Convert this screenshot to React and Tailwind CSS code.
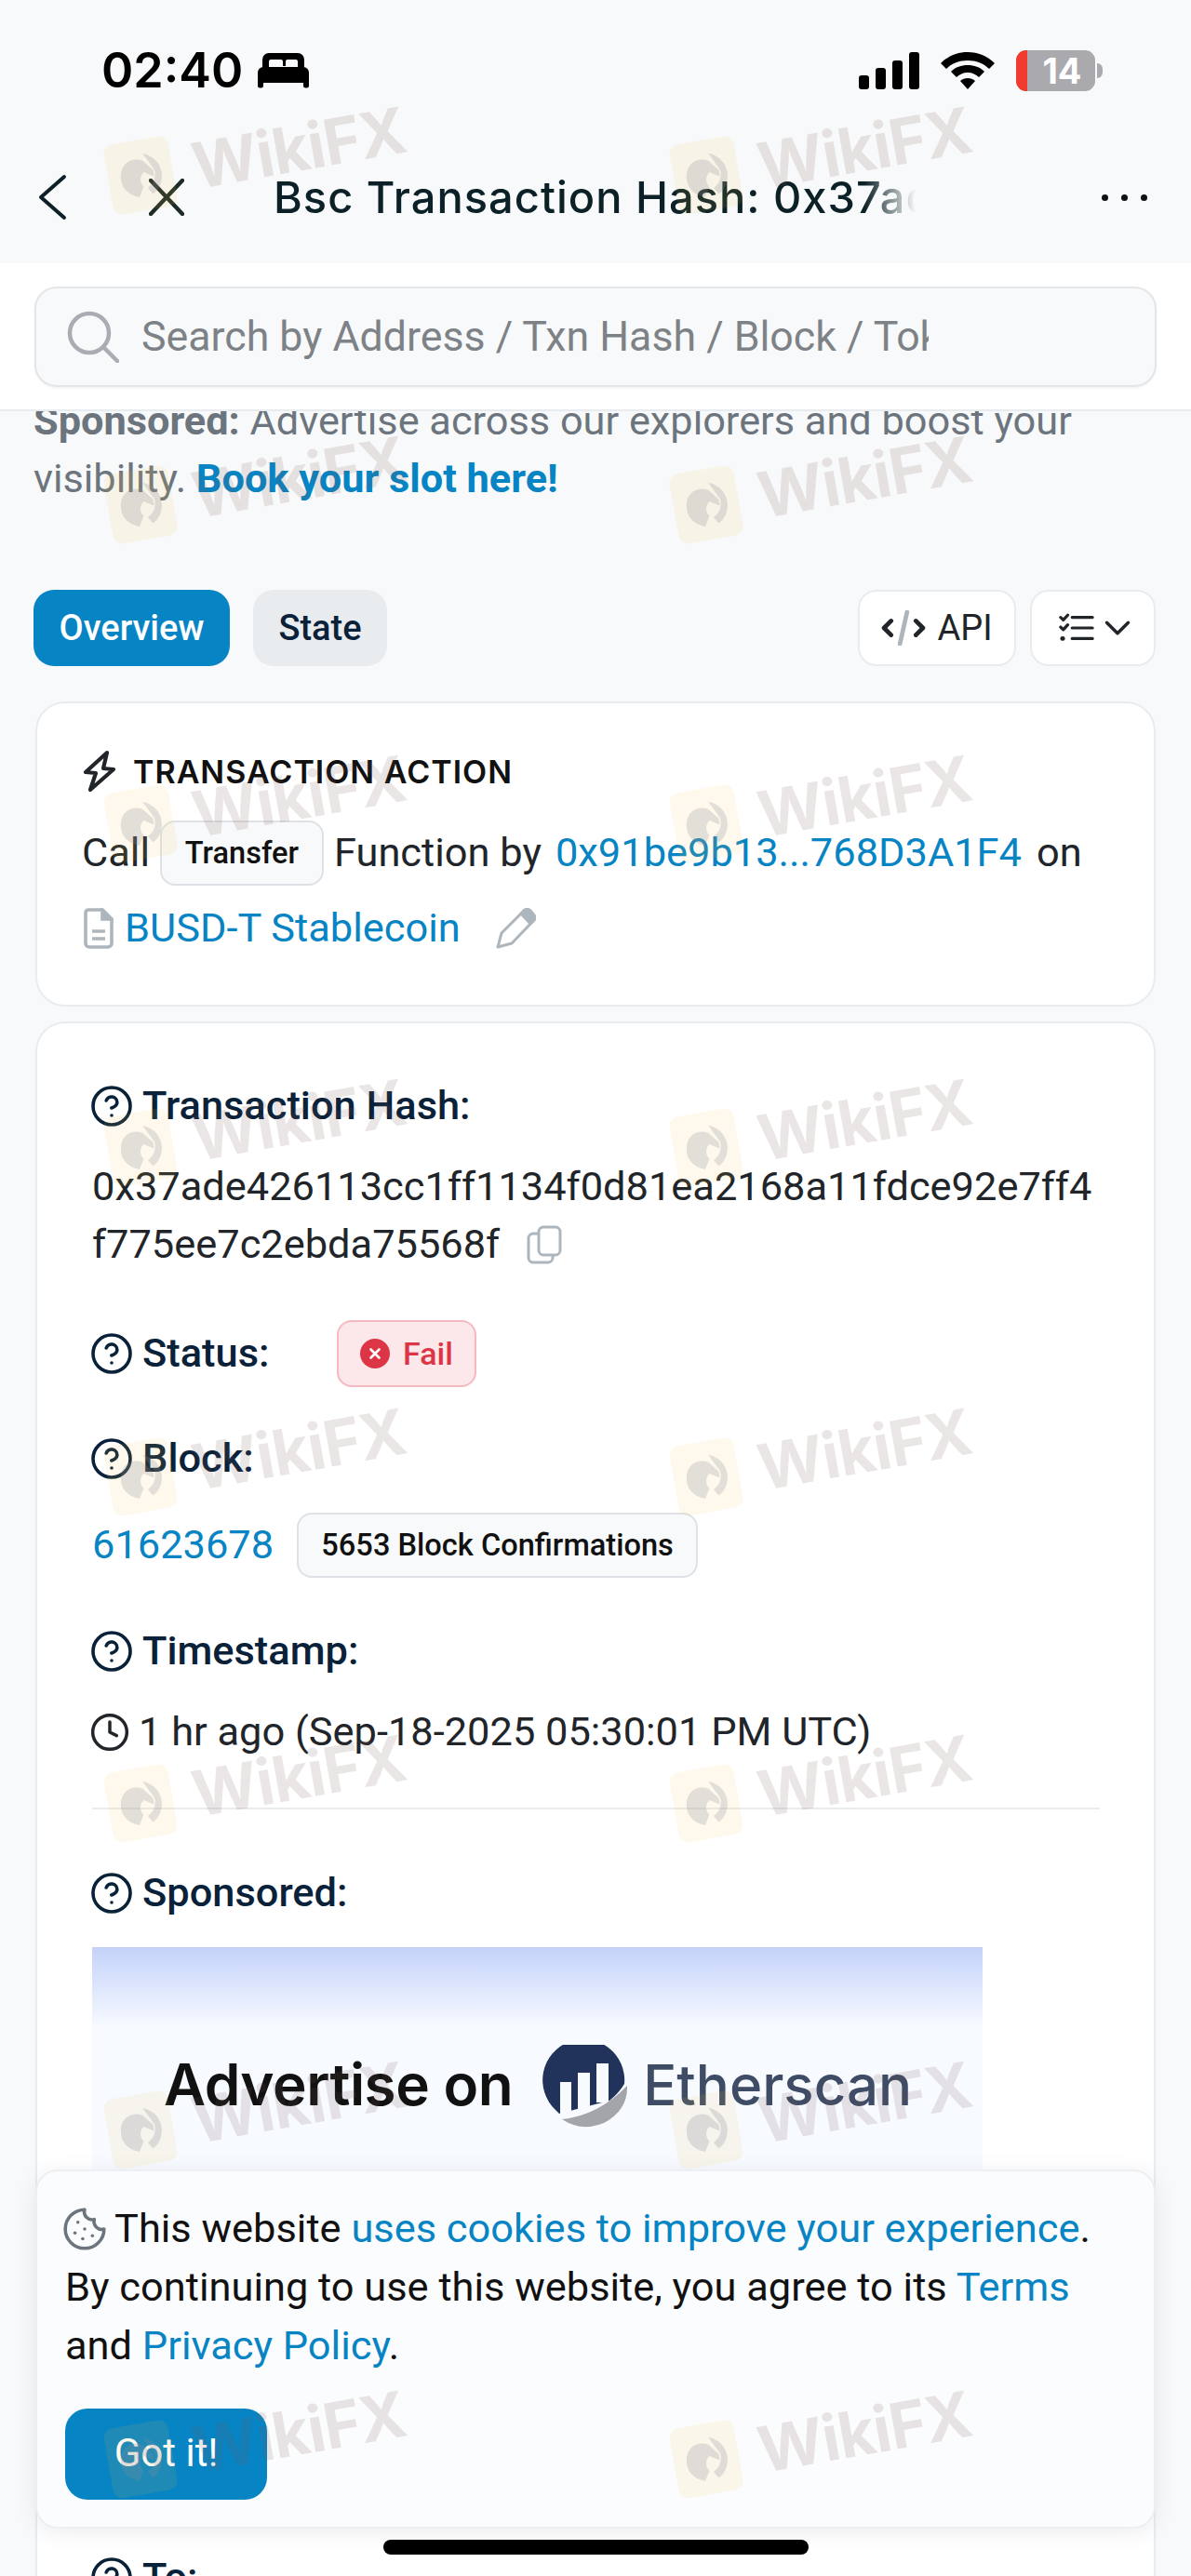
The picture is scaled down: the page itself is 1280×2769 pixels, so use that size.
import React from "react";
import { CircleHelp, Clock, ChevronDown, Cookie } from "lucide-react";

const WM_TOPS = [
  "top-[125px]", "top-[479px]", "top-[822px]", "top-[1170px]",
  "top-[1524px]", "top-[1875px]", "top-[2226px]", "top-[2580px]",
];

function Watermark({ cls }) {
  return (
    <div className={"absolute flex w-[340px] items-center gap-[22px] -rotate-[10deg] " + cls}>
      <div className="flex h-[76px] w-[70px] shrink-0 items-center justify-center rounded-[10px] bg-[#f5c343]/10">
        <svg viewBox="0 0 50 50" className="h-[56px] w-[56px] rotate-[10deg]" fill="#8c8c9a" fillOpacity="0.24">
          <path d="M6 26C6 14 16 7 27 11L37 20L38 26L28 22C24 26 24 32 28 36L24 46C12 44 6 36 6 26Z" />
          <path d="M27 4A22 22 0 0 1 37 43L32 37A15 15 0 0 0 38 19Z" />
        </svg>
      </div>
      <span className="font-['Inter',sans-serif] text-[68px] font-bold leading-[80px] tracking-[-1px] text-[#785a5a]/15">WikiFX</span>
    </div>
  );
}

function Label({ children, cls = "" }) {
  return (
    <div className={"flex h-[50px] items-center text-[43.4px] font-medium text-[#0a2239] " + cls}>
      <CircleHelp className="-ml-[3px] h-[48px] w-[48px] shrink-0 text-[#0a2239]" strokeWidth={1.8} />
      <span className="ml-[9px]">{children}</span>
    </div>
  );
}

export default function App() {
  return (
    <div className="relative h-[2769px] w-[1280px] overflow-hidden bg-[#f8f9fa] font-['Roboto',sans-serif] text-[43.4px] text-[#111827]">
      {/* status bar */}
      <div className="flex h-[152px] items-center justify-between pl-[109px] pr-[95px]">
        <div className="flex items-center gap-[16px]">
          <span className="font-['Inter',sans-serif] text-[52px] font-semibold leading-none text-black">02:40</span>
          <svg viewBox="0 0 55 38" className="h-[38px] w-[55px]">
            <path d="M5 16V7a7 7 0 0 1 7-7h31a7 7 0 0 1 7 7v9H43V9a2 2 0 0 0-2-2H32a2 2 0 0 0-2 2v5h-3V9a2 2 0 0 0-2-2H14a2 2 0 0 0-2 2v7Z" fill="#000" />
            <path d="M6 15h43a6 6 0 0 1 6 6v14a2.5 2.5 0 0 1-2.5 2.5h-1A2.5 2.5 0 0 1 49 35v-3H6v3a2.5 2.5 0 0 1-2.5 2.5h-1A2.5 2.5 0 0 1 0 35V21a6 6 0 0 1 6-6Z" fill="#000" />
          </svg>
        </div>
        <div className="flex items-center gap-[23px]">
          <svg viewBox="0 0 65 40" className="h-[40px] w-[65px]">
            <rect x="0" y="25" width="11" height="15" rx="3" fill="#000" />
            <rect x="18" y="17" width="11" height="23" rx="3" fill="#000" />
            <rect x="36" y="9" width="11" height="31" rx="3" fill="#000" />
            <rect x="54" y="0" width="11" height="40" rx="3" fill="#000" />
          </svg>
          <svg viewBox="0 0 58 40" className="h-[40px] w-[58px]">
            <path d="M29 0C18 0 8 4 0 12l6 6c6-6 14-9 23-9s17 3 23 9l6-6C50 4 40 0 29 0z" fill="#000" />
            <path d="M29 14c-7 0-13 2-18 7l6 6c3-3 7-5 12-5s9 2 12 5l6-6c-5-5-11-7-18-7z" fill="#000" />
            <path d="M29 28c-3 0-6 1-8 3l8 9 8-9c-2-2-5-3-8-3z" fill="#000" />
          </svg>
          <div className="flex items-center gap-[2px]">
            <div className="relative flex h-[44px] w-[85px] items-center justify-center overflow-hidden rounded-[11px] bg-[#a9a9ae] pl-[14px]">
              <div className="absolute inset-y-0 left-0 w-[12px] bg-[#f23b2f]" />
              <span className="font-['Inter',sans-serif] text-[38px] font-bold leading-none text-white">14</span>
            </div>
            <div className="h-[16px] w-[6px] rounded-r-full bg-[#a9a9ae]" />
          </div>
        </div>
      </div>

      {/* nav bar */}
      <div className="flex h-[131px] items-start pb-[11px]">
        <div className="flex h-[120px] w-full items-center">
          <svg viewBox="0 0 31 50" className="ml-[41px] h-[50px] w-[31px] shrink-0" fill="none" stroke="#0d2027" strokeWidth="4" strokeLinecap="round" strokeLinejoin="round">
            <path d="M28 3 L3 25 L28 47" />
          </svg>
          <svg viewBox="0 0 38 40" className="ml-[88px] h-[40px] w-[38px] shrink-0" fill="none" stroke="#1c2b26" strokeWidth="4.4" strokeLinecap="round">
            <path d="M2 2 L36 38 M36 2 L2 38" />
          </svg>
          <div className="ml-[96px] w-[690px] overflow-hidden whitespace-nowrap font-['Inter',sans-serif] text-[47px] font-medium tracking-[1px] text-[#0b2027] [mask-image:linear-gradient(to_right,black_92%,transparent)]">
            Bsc Transaction Hash: 0x37ade426113cc1
          </div>
          <div className="ml-auto mr-[47px] flex gap-[14px]">
            <div className="h-[7px] w-[7px] rounded-full bg-[#111]" />
            <div className="h-[7px] w-[7px] rounded-full bg-[#111]" />
            <div className="h-[7px] w-[7px] rounded-full bg-[#111]" />
          </div>
        </div>
      </div>

      {/* search */}
      <div className="h-[159px] border-b-2 border-[#e9ecef] bg-white px-[37px] pt-[25px]">
        <div className="flex h-[108px] items-center rounded-[24px] border-2 border-[#e4e7ea] bg-[#f8f9fa] pl-[33px] shadow-[0_1px_3px_rgba(0,0,0,0.06)]">
          <svg viewBox="0 0 56 56" className="h-[56px] w-[56px] shrink-0" fill="none" stroke="#a9adb3" strokeWidth="4.5" strokeLinecap="round">
            <circle cx="24" cy="24" r="21" />
            <path d="M40 40 L54 54" />
          </svg>
          <div className="ml-[24px] mt-[2px] w-[846px] overflow-hidden whitespace-nowrap text-[44.7px] text-[#7d8287]">
            Search by Address / Txn Hash / Block / Token / Domain Name
          </div>
        </div>
      </div>

      {/* page content */}
      <div className="h-[2327px] overflow-hidden pl-[36px] pr-[38px]">
        <p className="-mt-[20px] text-[43.3px] leading-[62px] text-[#6c757d]">
          <span className="font-bold">Sponsored:</span> Advertise across our explorers and boost your
          <br />
          visibility. <span className="font-bold text-[#0784c3]">Book your slot here!</span>
        </p>

        {/* tabs */}
        <div className="mt-[88px] flex h-[82px] items-stretch">
          <div className="flex w-[211px] items-center justify-center rounded-[22px] bg-[#0784c3] text-[38px] font-medium text-white">Overview</div>
          <div className="ml-[25px] flex w-[144px] items-center justify-center rounded-[22px] bg-[#e9ecef] text-[38px] font-medium text-[#0a2239]">State</div>
          <div className="ml-auto flex w-[170px] items-center justify-center gap-[12px] rounded-[20px] border-2 border-[#e9ecef] bg-white text-[38px] text-[#212529]">
            <svg viewBox="0 0 50 40" className="h-[38px] w-[48px]" fill="none" strokeWidth="5" strokeLinecap="round" strokeLinejoin="round">
              <path d="M11 12 L3 20 L11 28" stroke="#212529" />
              <path d="M39 12 L47 20 L39 28" stroke="#212529" />
              <path d="M29 2 L21 38" stroke="#adb5bd" />
            </svg>
            <span>API</span>
          </div>
          <div className="ml-[15px] flex w-[135px] items-center justify-center rounded-[20px] border-2 border-[#e9ecef] bg-white">
            <svg viewBox="0 0 40 32" className="h-[32px] w-[38px]" fill="none" stroke="#212529" strokeWidth="3.4" strokeLinecap="round" strokeLinejoin="round">
              <path d="M2 4 L5 7 L10 1.5" />
              <path d="M2 15 L5 18 L10 12.5" />
              <path d="M4 28 L4.5 28" strokeWidth="5" />
              <path d="M15 4 H38 M15 16 H38 M15 28 H38" />
            </svg>
            <ChevronDown className="-mr-[12px] ml-[2px] h-[46px] w-[46px] text-[#212529]" strokeWidth={1.8} />
          </div>
        </div>

        {/* transaction action */}
        <div className="ml-[2px] mt-[38px] h-[328px] rounded-[32px] border-2 border-[#e9ecef] bg-white pl-[48px] pt-[48px]">
          <div className="flex h-[50px] items-center gap-[17px] font-['Inter',sans-serif] text-[34px] font-semibold tracking-[1px] text-[#111]">
            <svg viewBox="0 0 38 46" className="h-[46px] w-[38px]" fill="none" stroke="#212529" strokeWidth="4.2" strokeLinejoin="round">
              <path d="M27 3 L4 24 L15 25 L9 43 L34 21 L23 20 Z" />
            </svg>
            <span>TRANSACTION ACTION</span>
          </div>
          <div className="mt-[28px] flex h-[70px] items-center whitespace-nowrap text-[#212529]">
            <span>Call</span>
            <span className="ml-[11px] flex h-[70px] w-[176px] items-center justify-center rounded-[16px] border-2 border-[#dee2e6] bg-[#f8f9fa] text-[32.6px] font-medium text-[#111]">Transfer</span>
            <span className="ml-[11px]">Function by</span>
            <span className="ml-[15px] text-[#0784c3]">0x91be9b13...768D3A1F4</span>
            <span className="ml-[16px]">on</span>
          </div>
          <div className="mt-[21px] flex h-[50px] items-center">
            <svg viewBox="0 0 32 44" className="ml-[2px] h-[44px] w-[32px]" fill="none" stroke="#adb5bd" strokeWidth="3.6">
              <path d="M5 2 H20 L30 12 V38 A4 4 0 0 1 26 42 H6 A4 4 0 0 1 2 38 V5 A3 3 0 0 1 5 2 Z" />
              <path d="M20 2 V12 H30 Z" fill="#adb5bd" />
              <path d="M9 25 H23 M9 33 H23" strokeWidth="3.5" />
            </svg>
            <span className="ml-[12px] text-[#0784c3]">BUSD-T Stablecoin</span>
            <svg viewBox="0 0 44 44" className="ml-[37px] h-[44px] w-[44px]" fill="none" stroke="#adb5bd" strokeWidth="3" strokeLinejoin="round">
              <path d="M3 42 L7 27 L30 4 A5 5 0 0 1 38 3 L42 8 A5 5 0 0 1 41 14 L18 38 Z" />
              <path d="M28 6 L31 3 A5 5 0 0 1 38 3 L42 8 A5 5 0 0 1 41 14 L38 17 Z" fill="#adb5bd" />
            </svg>
          </div>
        </div>

        {/* overview */}
        <div className="ml-[2px] mt-[16px] h-[1800px] rounded-t-[32px] border-x-2 border-t-2 border-[#e9ecef] bg-white pl-[59px] pr-[58px] pt-[64px]">
          <Label>Transaction Hash:</Label>
          <div className="mt-[31px] leading-[62px] text-[#212529]">
            <div className="whitespace-nowrap">0x37ade426113cc1ff1134f0d81ea2168a11fdce92e7ff4</div>
            <div className="flex items-center whitespace-nowrap">
              f775ee7c2ebda75568f
              <svg viewBox="0 0 38 42" className="ml-[29px] h-[42px] w-[38px]" fill="none" stroke="#adb5bd" strokeWidth="3">
                <rect x="13" y="2" width="23" height="30" rx="5" />
                <path d="M13 9 H7 A5 5 0 0 0 2 14 V35 A5 5 0 0 0 7 40 H23 A5 5 0 0 0 28 35 V32" />
              </svg>
            </div>
          </div>

          <div className="mt-[50px] flex h-[72px] items-center">
            <Label cls="w-[263px]">Status:</Label>
            <div className="flex h-[72px] w-[150px] items-center justify-center gap-[14px] rounded-[16px] border-2 border-[#f5b9c0] bg-[#fce8ea] text-[34px] font-medium text-[#dc3545]">
              <svg viewBox="0 0 32 32" className="h-[32px] w-[32px]">
                <circle cx="16" cy="16" r="16" fill="#dc3545" />
                <path d="M11.5 11.5 L20.5 20.5 M20.5 11.5 L11.5 20.5" stroke="#fff" strokeWidth="2.6" strokeLinecap="round" />
              </svg>
              <span>Fail</span>
            </div>
          </div>

          <div className="mt-[52px]">
            <Label>Block:</Label>
          </div>
          <div className="mt-[33px] flex h-[70px] items-center">
            <span className="text-[#0784c3]">61623678</span>
            <span className="ml-[25px] flex h-[70px] w-[431px] items-center justify-center rounded-[16px] border-2 border-[#dee2e6] bg-[#f8f9fa] text-[32.6px] font-medium text-[#111]">5653 Block Confirmations</span>
          </div>

          <div className="mt-[54px]">
            <Label>Timestamp:</Label>
          </div>
          <div className="mt-[37px] flex h-[50px] items-center whitespace-nowrap text-[#212529]">
            <Clock className="-ml-[3px] h-[44px] w-[44px] shrink-0 text-[#212529]" strokeWidth={1.9} />
            <span className="ml-[9px]">1 hr ago (Sep-18-2025 05:30:01 PM UTC)</span>
          </div>

          <div className="mt-[56px] h-[2px] bg-[#e9ecef]" />

          <div className="mt-[65px]">
            <Label>Sponsored:</Label>
          </div>
          <div className="mt-[33px] h-[300px] w-[957px] bg-[#f7faff]">
            <div className="h-[85px] bg-gradient-to-b from-[#c4d2f9] to-[#f7faff]" />
            <div className="flex items-center pl-[77px] pt-[14px]">
              <span className="font-['Inter',sans-serif] text-[62px] font-semibold leading-none tracking-[-0.5px] text-[#111]">Advertise on</span>
              <svg viewBox="0 0 92 92" className="ml-[32px] mt-[6px] h-[92px] w-[92px] shrink-0">
                <path d="M14 70A44 44 0 1 1 88 42Q82 52 72 60L18 74Z" fill="#21325b" />
                <rect x="19" y="40" width="12" height="34" fill="#f7faff" />
                <rect x="38" y="30" width="13" height="40" fill="#f7faff" />
                <rect x="58" y="20" width="13" height="42" fill="#f7faff" />
                <path d="M21 80Q60 76 91 44Q92 70 66 84Q42 94 21 80Z" fill="#a3a5aa" />
              </svg>
              <span className="ml-[16px] font-['Inter',sans-serif] text-[60px] font-medium leading-none text-[#3e4c66]">Etherscan</span>
            </div>
          </div>

          <div className="mt-[353px]">
            <Label>To:</Label>
          </div>
        </div>
      </div>

      {/* cookie card */}
      <div className="absolute left-[38px] top-[2332px] h-[386px] w-[1204px] rounded-[24px] border-2 border-[#edf0f2] bg-[#fbfcfd] pl-[30px] pt-[30px] shadow-[0_4px_24px_rgba(0,0,0,0.08)]">
        <div className="leading-[63px] text-[#111]">
          <div className="flex items-center whitespace-nowrap">
            <Cookie className="-ml-[4px] mr-[7px] h-[50px] w-[50px] shrink-0 text-[#6c757d]" strokeWidth={1.7} />
            <span>This website&nbsp;</span>
            <span className="text-[#0784c3]">uses cookies to improve your experience</span>.
          </div>
          <div className="whitespace-nowrap">
            By continuing to use this website, you agree to its <span className="text-[#0784c3]">Terms</span>
          </div>
          <div className="whitespace-nowrap">
            and <span className="text-[#0784c3]">Privacy Policy</span>.
          </div>
        </div>
        <div className="mt-[36px] flex h-[98px] w-[217px] items-center justify-center rounded-[24px] bg-[#0784c3] pb-[3px] text-[42px] text-white">Got it!</div>
      </div>

      {/* home indicator */}
      <div className="absolute left-[412px] top-[2730px] h-[16px] w-[457px] rounded-full bg-black" />

      {/* watermarks */}
      <div className="pointer-events-none absolute inset-0">
        {WM_TOPS.map((t) => (
          <React.Fragment key={t}>
            <Watermark cls={"left-[114px] " + t} />
            <Watermark cls={"left-[722px] " + t} />
          </React.Fragment>
        ))}
      </div>
    </div>
  );
}
